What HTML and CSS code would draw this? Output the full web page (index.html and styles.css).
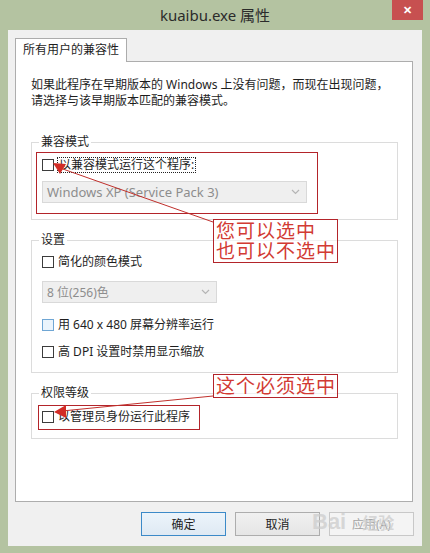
FILE: index.html
```html
<!DOCTYPE html>
<html lang="zh-CN">
<head>
    <meta charset="UTF-8">
    <meta name="viewport" content="width=device-width, initial-scale=1.0">
    <link rel="stylesheet" href="styles.css">
    <title>kuaibu.exe 属性</title>
</head>
<body>
    <div class="window">
        <div class="titlebar">
            <span></span>
            <div class="title">kuaibu.exe 属性</div>
            <div class="close">✕</div>
        </div>
        <div class="panel">
            <div class="tabs">
                <div class="tab">所有用户的兼容性</div>
            </div>
            <div class="page">
                <p class="intro">如果此程序在早期版本的 Windows 上没有问题，而现在出现问题，<br>请选择与该早期版本匹配的兼容模式。</p>

                <!-- 兼容模式 -->
                <fieldset class="group group-compat">
                    <legend>兼容模式</legend>
                    <div class="check-row first">
                        <span class="box"></span>
                        <span class="focus">以兼容模式运行这个程序:</span>
                    </div>
                    <div class="combo combo-wide">
                        <span>Windows XP (Service Pack 3)</span>
                        <svg width="9" height="6" viewBox="0 0 9 6"><polyline points="1,1 4.5,4.5 8,1" fill="none" stroke="#b5b5b5" stroke-width="1.2"/></svg>
                    </div>
                </fieldset>

                <!-- 设置 -->
                <fieldset class="group group-settings">
                    <legend>设置</legend>
                    <div class="check-row first">
                        <span class="box"></span>
                        <span>简化的颜色模式</span>
                    </div>
                    <div class="combo combo-narrow">
                        <span>8 位(256)色</span>
                        <svg width="9" height="6" viewBox="0 0 9 6"><polyline points="1,1 4.5,4.5 8,1" fill="none" stroke="#b5b5b5" stroke-width="1.2"/></svg>
                    </div>
                    <div class="check-row after-combo">
                        <span class="box hover"></span>
                        <span>用 640 x 480 屏幕分辨率运行</span>
                    </div>
                    <div class="check-row next">
                        <span class="box"></span>
                        <span>高 DPI 设置时禁用显示缩放</span>
                    </div>
                </fieldset>

                <!-- 权限等级 -->
                <fieldset class="group group-level">
                    <legend>权限等级</legend>
                    <div class="check-row first">
                        <span class="box"></span>
                        <span>以管理员身份运行此程序</span>
                    </div>
                </fieldset>
            </div>
            <div class="buttons">
                <button class="btn default">确定</button>
                <button class="btn">取消</button>
                <button class="btn disabled">应用(A)</button>
            </div>
        </div>

        <!-- 标注 -->
        <svg class="marks" width="430" height="553" viewBox="0 0 430 553">
            <rect x="36.5" y="152.5" width="281" height="61" fill="none" stroke="#b3242a" stroke-width="1"/>
            <rect x="38.5" y="405.5" width="161" height="24" fill="none" stroke="#b3242a" stroke-width="1"/>
            <line x1="213" y1="222" x2="60" y2="168" stroke="#c0302c" stroke-width="1"/>
            <polygon points="53,163 66,164 60,174" fill="#d22c26"/>
            <line x1="213" y1="396" x2="62" y2="411" stroke="#c0302c" stroke-width="1"/>
            <polygon points="54,412 66,405 66,418" fill="#d22c26"/>
        </svg>
        <div class="note note-one">您可以选中<br>也可以不选中</div>
        <div class="note note-two">这个必须选中</div>
        <div class="watermark">Bai<span>经验</span></div>
    </div>
</body>
</html>
```

FILE: styles.css
```css
* {
    box-sizing: border-box;
}
body {
    margin: 0;
    background-color: #b4c3a1;
    font-family: "Noto Sans", "Noto Sans CJK SC", sans-serif;
    font-size: 12px;
    color: #1e1e1e;
}
.window {
    position: relative;
    width: 430px;
    height: 553px;
}
/* タイトルバー */
.titlebar {
    display: grid;
    grid-template-columns: 1fr auto 1fr;
    height: 30px;
}
.title {
    font-size: 15px;
    line-height: 30px;
    color: #2b2b2b;
}
.close {
    justify-self: end;
    width: 31px;
    height: 20px;
    margin-right: 7px;
    background-color: #c75050;
    color: #fff;
    font-size: 11px;
    font-weight: bold;
    line-height: 20px;
    text-align: center;
}
/* 本体 */
.panel {
    height: 516px;
    margin: 0 8px;
    padding: 8px 9px 0 7px;
    background-color: #f0f0f0;
}
.tabs {
    display: flex;
}
.tab {
    position: relative;
    z-index: 1;
    width: 112px;
    height: 24px;
    margin-bottom: -1px;
    border: 1px solid #acacac;
    border-bottom: none;
    background-color: #fff;
    line-height: 22px;
    text-align: center;
}
.page {
    height: 441px;
    padding: 15px 14px 0 15px;
    border: 1px solid #adadad;
    background-color: #fff;
}
.intro {
    margin: 0;
    line-height: 16px;
}
.group {
    width: 367px;
    margin: 12px 0 0;
    padding: 0 10px;
    border: 1px solid #dcdcdc;
}
.group legend {
    margin-left: -3px;
    padding: 0 2px;
    line-height: 16px;
}
.group-compat {
    margin-top: 25px;
    padding-bottom: 16px;
}
.group-settings {
    padding-bottom: 12px;
}
.group-level {
    padding-bottom: 13px;
}
.check-row {
    display: flex;
    align-items: center;
    height: 16px;
    line-height: 16px;
}
.group-compat .first {
    margin-top: 7px;
}
.group-settings .first {
    margin-top: 6px;
}
.group-level .first {
    margin-top: 8px;
}
.after-combo {
    margin-top: 14px;
}
.next {
    margin-top: 11px;
}
.box {
    width: 12px;
    height: 12px;
    margin-right: 4px;
    border: 1px solid #3c3c3c;
    background-color: #fff;
}
.box.hover {
    border-color: #6fa6d4;
    background-color: #eaf4fc;
}
.focus {
    margin-left: -1px;
    padding: 0 1px;
    border: 1px dotted #222;
    line-height: 14px;
}
.combo {
    display: flex;
    align-items: center;
    justify-content: space-between;
    height: 22px;
    padding: 0 6px 0 4px;
    border: 1px solid #d9d9d9;
    background-color: #efefef;
    color: #8d8d8d;
    font-size: 13px;
}
.group-compat .combo {
    margin-top: 8px;
}
.group-settings .combo {
    margin-top: 11px;
}
.combo-wide {
    width: 265px;
}
.combo-narrow {
    width: 175px;
    font-size: 12px;
}
/* ボタン */
.buttons {
    display: flex;
    justify-content: flex-end;
    gap: 9px;
    margin: 10px -1px 0 0;
}
.btn {
    width: 85px;
    height: 24px;
    border: 1px solid #adadad;
    background: linear-gradient(#f0f0f0, #e5e5e5);
    font-family: "Noto Sans", "Noto Sans CJK SC", sans-serif;
    font-size: 12px;
    color: #1e1e1e;
}
.btn.default {
    border-color: #3c8ac8;
    background: linear-gradient(#ecf4fb, #dfe9f3);
}
.btn.disabled {
    border-color: #c8c8c8;
    background: #f4f4f4;
    color: #a4a4a4;
}
/* 注釈 */
.marks {
    position: absolute;
    top: 0;
    left: 0;
    pointer-events: none;
}
.note {
    position: absolute;
    left: 213px;
    width: 125px;
    padding-left: 2px;
    border: 1px solid #b3242a;
    background-color: rgba(255, 255, 255, 0.6);
    color: #d23a33;
    font-family: "Noto Sans CJK SC", sans-serif;
    font-size: 19px;
    letter-spacing: 1px;
    line-height: 20px;
}
.note-one {
    top: 219px;
    height: 44px;
}
.note-two {
    top: 374px;
    height: 24px;
}
.watermark {
    position: absolute;
    left: 312px;
    top: 509px;
    color: rgba(205, 205, 205, 0.75);
    font-family: "Liberation Sans", sans-serif;
    font-size: 22px;
    font-weight: bold;
    pointer-events: none;
}
.watermark span {
    margin-left: 16px;
    font-family: "Noto Sans CJK SC", sans-serif;
    font-size: 16px;
}
```
